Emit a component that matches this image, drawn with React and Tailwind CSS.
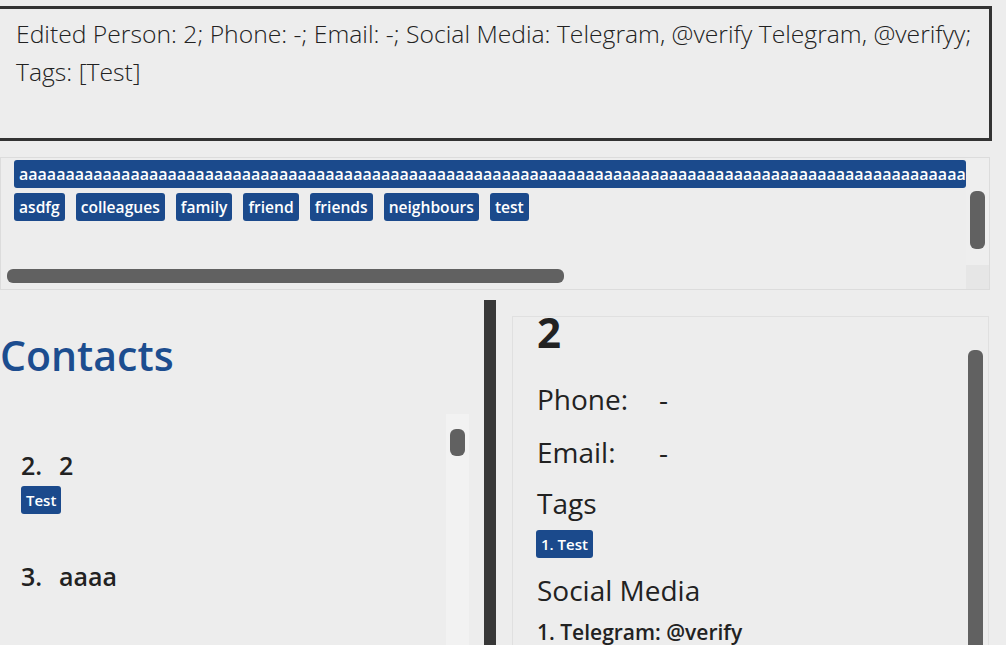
import React from "react";

const FONT = { fontFamily: '"Open Sans", "Noto Sans", sans-serif' };

const tags = ["asdfg", "colleagues", "family", "friend", "friends", "neighbours", "test"];

function Chip({ children, className = "" }) {
  return (
    <span
      className={`inline-flex h-[28px] items-center rounded-[3px] bg-[#1b4a8c] px-[5px] font-semibold leading-[28px] text-white whitespace-nowrap ${className}`}
    >
      {children}
    </span>
  );
}

function ResultBox() {
  return (
    <div className="mt-[6px] h-[135px] w-[992px] shrink-0 border-[3px] border-l-0 border-[#333333] pl-[16px] pt-[6px]">
      <p className="text-[24.7px] font-light leading-[38px] text-[#222222]">
        Edited Person: 2; Phone: -; Email: -; Social Media: Telegram, @verify Telegram, @verifyy;
        <br />
        Tags: [Test]
      </p>
    </div>
  );
}

function TagPane() {
  return (
    <div className="mt-[16px] flex h-[133px] w-[990px] shrink-0 flex-col border border-[#dcdcdc]">
      <div className="flex h-[107px]">
        <div className="flex-1 overflow-hidden pl-[13px] pt-[2px]">
          <div className="flex h-[28px] items-center whitespace-nowrap rounded-[3px] bg-[#1b4a8c] px-[5px] text-[16px] font-semibold text-white">
            {"a".repeat(130)}
          </div>
          <div className="mt-[5px] flex gap-[11px]">
            {tags.map((t) => (
              <Chip key={t} className="text-[15.6px]">
                {t}
              </Chip>
            ))}
          </div>
        </div>
        <div className="w-[23px] bg-[#eeeeee] pl-[4px] pt-[33px]">
          <div className="h-[58px] w-[15px] rounded-[6px] bg-[#616161]" />
        </div>
      </div>
      <div className="flex flex-1">
        <div className="flex-1 pl-[6px] pt-[4px]">
          <div className="h-[14px] w-[557px] rounded-[6px] bg-[#616161]" />
        </div>
        <div className="w-[23px] bg-[#e6e6e6]" />
      </div>
    </div>
  );
}

function ContactList() {
  return (
    <div className="flex w-[484px] flex-col">
      <h1 className="mt-[39px] text-[41px] font-semibold leading-[52px] text-[#1c4d8f]">Contacts</h1>
      <div className="mt-[33px] flex flex-1">
        <div className="w-[446px] pl-[21px] text-[#222222]">
          <div className="mt-[35px] flex text-[25px] font-semibold leading-[32px]">
            <span className="w-[38px]">2.</span>
            <span>2</span>
          </div>
          <div className="mt-[5px]">
            <Chip className="text-[15px]">Test</Chip>
          </div>
          <div className="mt-[46px] flex text-[25px] font-semibold leading-[32px]">
            <span className="w-[38px]">3.</span>
            <span>aaaa</span>
          </div>
        </div>
        <div className="w-[23px] bg-[#f2f2f2] pl-[4px] pt-[15px]">
          <div className="h-[27px] w-[15px] rounded-[6px] bg-[#616161]" />
        </div>
      </div>
    </div>
  );
}

function PersonCard() {
  return (
    <div className="flex flex-1 pl-[16px] pt-[26px]">
      <div className="flex w-[477px] border border-b-0 border-[#e0e0e0]">
        <div className="flex-1 overflow-hidden pl-[24px] text-[#222222]">
          <div className="-mt-[10px] text-[42px] font-bold leading-[50px]">2</div>
          <div className="mt-[24px] flex text-[28px] leading-[36px]">
            <span className="w-[122px]">Phone:</span>
            <span>-</span>
          </div>
          <div className="mt-[17px] flex text-[28px] leading-[36px]">
            <span className="w-[122px]">Email:</span>
            <span>-</span>
          </div>
          <div className="mt-[15px] text-[28px] leading-[36px]">Tags</div>
          <div className="mt-[9px]">
            <Chip className="-ml-[1px] text-[15px]">1. Test</Chip>
          </div>
          <div className="mt-[14px] text-[28px] leading-[36px]">Social Media</div>
          <div className="mt-[10px] text-[21px] font-semibold leading-[28px]">1. Telegram: @verify</div>
        </div>
        <div className="w-[24px] pl-[4px] pt-[33px]">
          <div className="h-full w-[15px] rounded-t-[6px] bg-[#616161]" />
        </div>
      </div>
    </div>
  );
}

export default function App() {
  return (
    <div style={FONT} className="flex h-[645px] w-[1006px] flex-col overflow-hidden bg-[#ededed]">
      <ResultBox />
      <TagPane />
      <div className="flex flex-1 overflow-hidden">
        <ContactList />
        <div className="mt-[10px] w-[12px] bg-[#383838]" />
        <PersonCard />
      </div>
    </div>
  );
}
